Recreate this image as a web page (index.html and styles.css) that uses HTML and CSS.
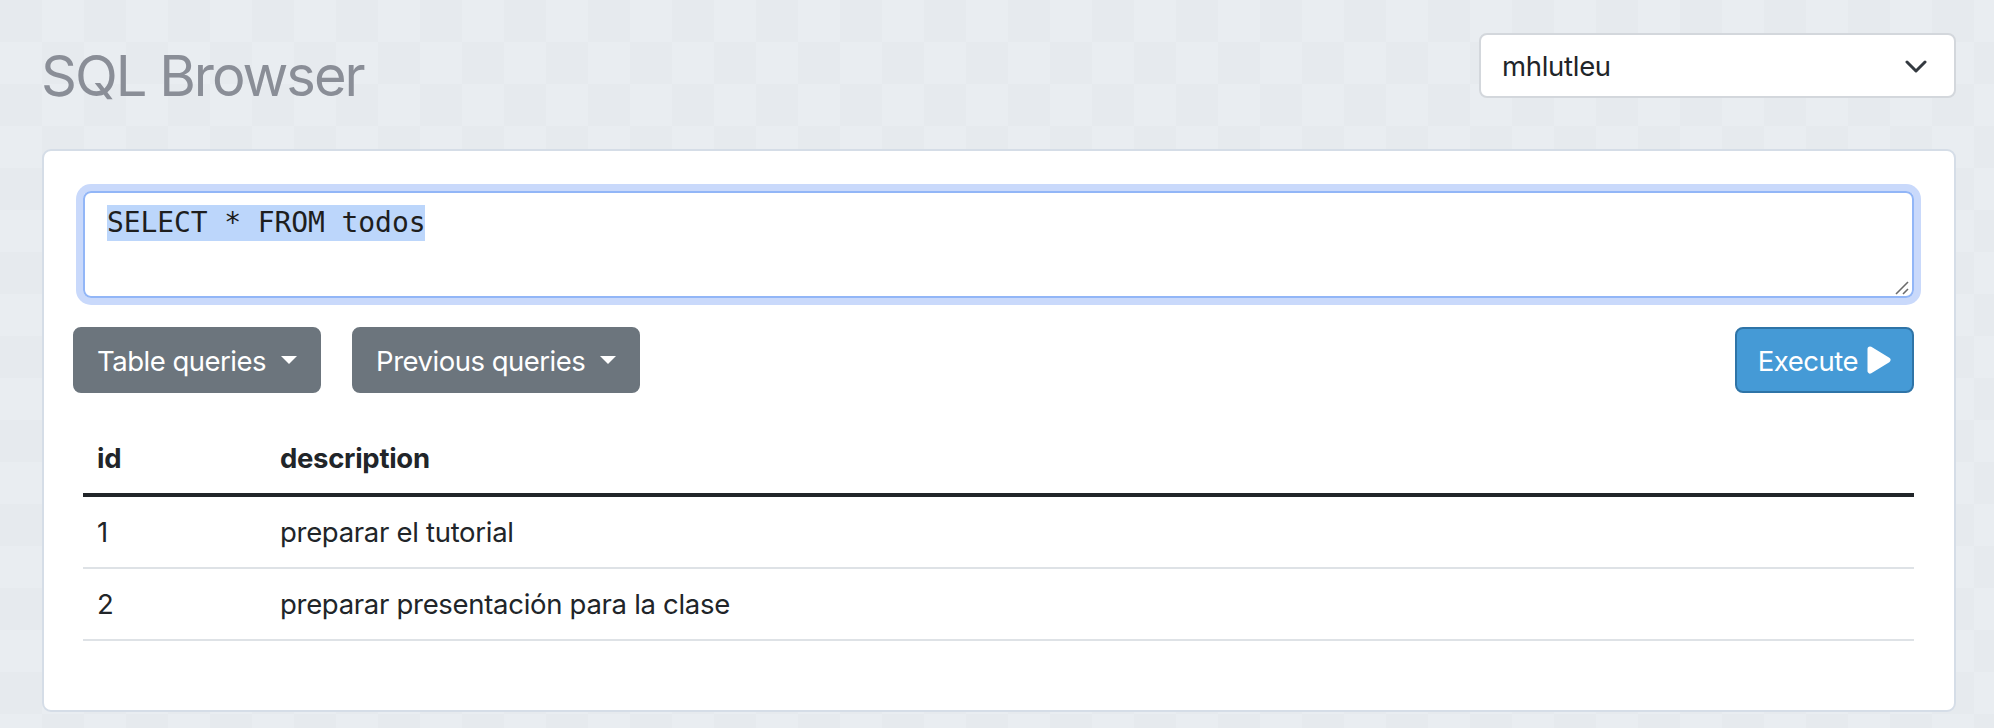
FILE: index.html
```html
<!DOCTYPE html>
<html lang="es">
<head>
<meta charset="utf-8">
<title>SQL Browser</title>
<link rel="stylesheet" href="styles.css">
</head>
<body>
<div class="page">
  <header class="topbar">
    <h2 class="title">SQL Browser</h2>
    <div class="db-select">
      <span class="db-name">mhlutleu</span>
      <svg class="chevron" width="22" height="13" viewBox="0 0 22 13"><polyline points="2,2 11,11 20,2" fill="none" stroke="#343a40" stroke-width="3" stroke-linecap="round" stroke-linejoin="round"/></svg>
    </div>
  </header>

  <main class="card">
    <div class="query-box">
      <span class="query-text">SELECT * FROM todos</span>
      <svg class="grip" width="14" height="14" viewBox="0 0 14 14"><line x1="1" y1="13" x2="13" y2="1" stroke="#6b6b6b" stroke-width="1.6"/><line x1="8" y1="13" x2="13" y2="8" stroke="#6b6b6b" stroke-width="1.6"/></svg>
    </div>

    <div class="actions">
      <div class="action-group">
        <button class="btn btn-grey">Table queries <span class="caret"></span></button>
        <button class="btn btn-grey">Previous queries <span class="caret"></span></button>
      </div>
      <button class="btn btn-exec">Execute <svg class="play" width="26" height="30" viewBox="0 0 26 30"><path d="M4 4 L22 15 L4 26 Z" fill="#fff" stroke="#fff" stroke-width="5" stroke-linejoin="round"/></svg></button>
    </div>

    <table class="results">
      <colgroup><col class="col-id"><col></colgroup>
      <thead>
        <tr><th>id</th><th>description</th></tr>
      </thead>
      <tbody>
        <tr><td>1</td><td>preparar el tutorial</td></tr>
        <tr><td>2</td><td>preparar presentación para la clase</td></tr>
      </tbody>
    </table>
  </main>
</div>
</body>
</html>
```
FILE: styles.css
```css
* { box-sizing: border-box; }

html, body {
  margin: 0;
  padding: 0;
}

body {
  background-color: #e7ebef;
  background-image: repeating-conic-gradient(#e9edf1 0% 25%, #e6eaee 0% 50%);
  background-size: 84px 84px;
  font-family: Inter, "Noto Sans", "Liberation Sans", sans-serif;
  letter-spacing: -0.3px;
  color: #212529;
  height: 728px;
  overflow: hidden;
}

.page {
  padding: 0 38px 0 42px;
}

.topbar {
  display: flex;
  justify-content: space-between;
  align-items: flex-start;
  padding-top: 33px;
  margin-bottom: 39px;
}

.title {
  margin: 9px 0 0 -1px;
  font-size: 56px;
  line-height: 68px;
  font-weight: 400;
  color: #8a8e97;
  letter-spacing: -2px;
}

.db-select {
  width: 477px;
  height: 65px;
  background: #fff;
  border: 2px solid #d3d7dc;
  border-radius: 8px;
  display: flex;
  align-items: center;
  justify-content: space-between;
  padding: 0 27px 0 21px;
  font-size: 27.5px;
}

.db-name { line-height: 40px; }

.chevron { display: block; margin-top: 2px; }

.card {
  background: #fff;
  border: 2px solid #d5dde7;
  border-radius: 9px;
  padding: 40px 40px 40px 39px;
}

.query-box {
  position: relative;
  height: 107px;
  border: 2px solid #92b6f7;
  border-radius: 8px;
  box-shadow: 0 0 0 7px #c9d9fb;
  padding: 12px 22px;
  font-family: "DejaVu Sans Mono", "Liberation Mono", monospace;
  font-size: 28px;
  line-height: 36px;
  letter-spacing: -0.1px;
}

.query-text {
  background: #bcd6fb;
  display: inline-block;
  height: 36px;
  color: #1e1e1e;
}

.grip {
  position: absolute;
  right: 3px;
  bottom: 1px;
}

.actions {
  display: flex;
  justify-content: space-between;
  align-items: center;
  margin-top: 29px;
  margin-left: -10px;
}

.action-group {
  display: flex;
  gap: 31px;
}

.btn {
  height: 66px;
  border-radius: 8px;
  font-family: Inter, "Noto Sans", "Liberation Sans", sans-serif;
  font-size: 27.5px;
  line-height: 40px;
  letter-spacing: -0.5px;
  color: #fff;
  display: flex;
  align-items: center;
  padding: 2px 22px 0 22px;
  cursor: pointer;
}

.btn-grey {
  background: #6c757d;
  border: 2px solid #6c757d;
  gap: 15px;
}

.caret {
  width: 0;
  height: 0;
  border-top: 8px solid #fff;
  border-left: 8px solid transparent;
  border-right: 8px solid transparent;
  margin-top: -2px;
}

.btn-exec {
  background: #459ad6;
  border: 2px solid #2f74a7;
  gap: 8px;
  padding: 2px 20px 0 21px;
}

.play { display: block; margin-top: -2px; }

.results {
  width: 100%;
  table-layout: fixed;
  border-collapse: collapse;
  margin-top: 31px;
  margin-bottom: 29px;
  font-size: 27.5px;
  line-height: 41px;
}

.results th,
.results td {
  text-align: left;
  padding: 14px 14px;
  vertical-align: top;
}

.results th {
  font-weight: 700;
  border-bottom: 4px solid #212529;
}

.results td {
  padding-top: 15px;
  border-bottom: 2px solid #dee2e6;
}

.col-id { width: 183px; }
```
